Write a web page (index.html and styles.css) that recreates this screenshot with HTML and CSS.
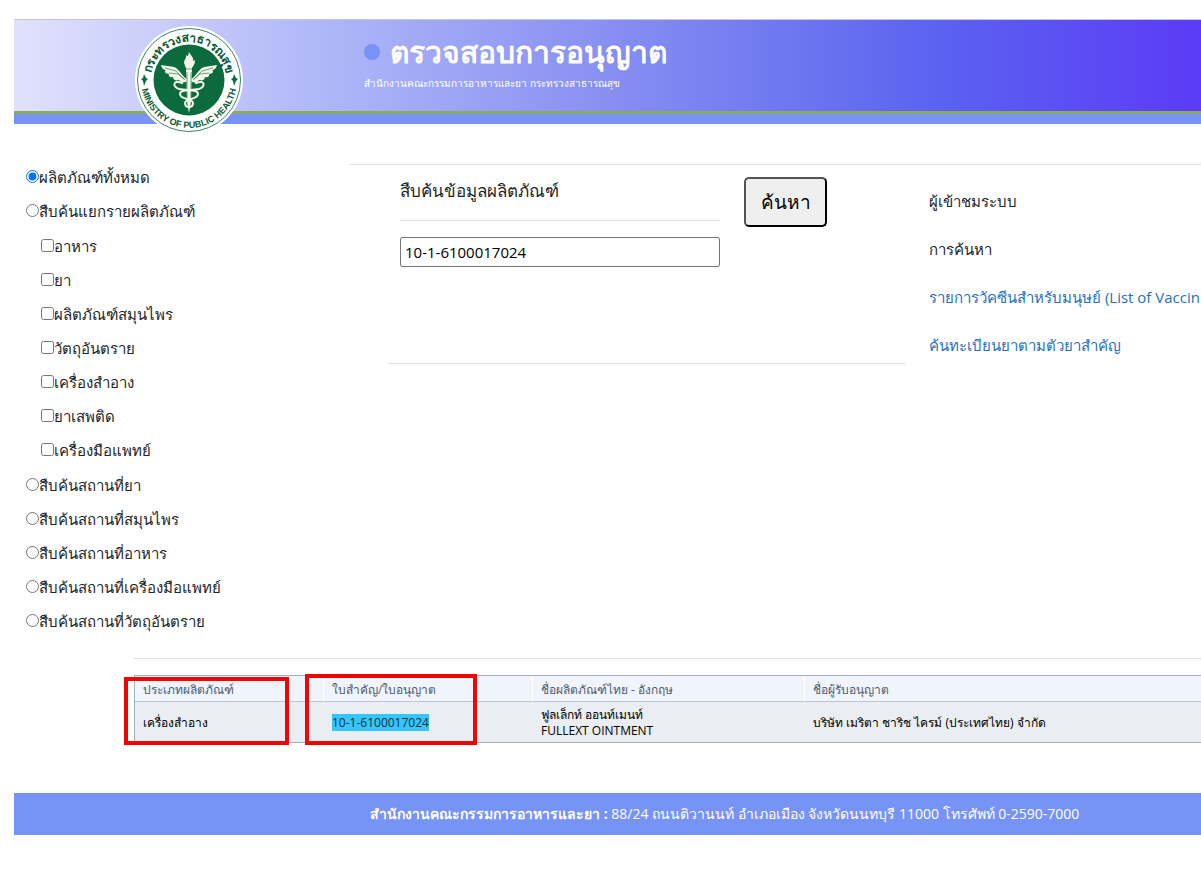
FILE: index.html
```html
<!DOCTYPE html>
<html lang="th">
	<head>
		<meta charset="utf-8">
		<title>ตรวจสอบการอนุญาต</title>
		<link rel="stylesheet" href="styles.css">
	</head>

	<body>
		<header class="banner">
			<svg class="logo" viewBox="0 0 108 108" role="img" aria-label="Ministry of Public Health">
				<defs>
					<path id="arcTop" d="M16 54 A38 38 0 0 1 92 54"/>
					<path id="arcBottom" d="M6 54 A48 48 0 0 0 102 54"/>
				</defs>
				<circle cx="54" cy="54" r="54" fill="#fff"/>
				<circle cx="54" cy="54" r="51.500" fill="none" stroke="#3b8560" stroke-width="1"/>
				<circle cx="54" cy="54" r="35.500" fill="#0b6b3c"/>
				<text class="seal-thai"><textPath href="#arcTop" startOffset="50%" text-anchor="middle">กระทรวงสาธารณสุข</textPath></text>
				<text class="seal-eng"><textPath href="#arcBottom" startOffset="50%" text-anchor="middle">MINISTRY OF PUBLIC HEALTH</textPath></text>
				<path fill="#0b6b3c" d="M9 48l2 4 2 1-2 2-2 5-1-5-2-2 2-1zM99 48l2 4 2 1-2 2-2 5-1-5-2-2 2-1z"/>
				<g transform="translate(0 4)">
					<!-- torch and wings -->
					<g fill="#f3f5ea">
						<path d="M52 49C47 47 45 39 39 37L26 35C27 39 29 40 31 40C29 41 30 44 34 44C33 46 35 48 38 47C38 50 41 51 44 50C46 53 50 53 52 51Z"/>
						<path d="M56 49C61 47 63 39 69 37L82 35C81 39 79 40 77 40C79 41 78 44 74 44C75 46 73 48 70 47C70 50 67 51 64 50C62 53 58 53 56 51Z"/>
						<path d="M51 38H57L56 72L54 83L52 72Z"/>
						<path d="M50 35C47 31 52 29 51 25C54 28 53 24 54 22C55 25 59 27 58 31L60 30C60 35 57 39 54 39C52 39 49 36 50 35Z"/>
					</g>
					<path class="wing-line" d="M30 38L41 41L49 49M34 43L43 44L50 50M78 38L67 41L59 49M74 43L65 44L58 50"/>
					<path class="wing-line" d="M49 39H59M52 42V72M56 42V72"/>
					<!-- snakes -->
					<g class="snake">
						<path d="M47 53C38 49 37 57 44 59C53 61 63 59 63 64C63 70 50 68 50 73C50 76 52 77 54 77"/>
						<path d="M61 53C70 49 71 57 64 59C55 61 45 59 45 64C45 70 58 68 58 73C58 76 56 77 54 77"/>
					</g>
				</g>
			</svg>
			<div class="banner-text">
				<h1>ตรวจสอบการอนุญาต</h1>
				<p>สำนักงานคณะกรรมการอาหารและยา กระทรวงสาธารณสุข</p>
			</div>
		</header>

		<main>
			<form class="search">
				<div class="types">
					<label><input type="radio" name="type" checked>ผลิตภัณฑ์ทั้งหมด</label>
					<label><input type="radio" name="type">สืบค้นแยกรายผลิตภัณฑ์</label>
					<div class="subtypes">
						<label><input type="checkbox">อาหาร</label>
						<label><input type="checkbox">ยา</label>
						<label><input type="checkbox">ผลิตภัณฑ์สมุนไพร</label>
						<label><input type="checkbox">วัตถุอันตราย</label>
						<label><input type="checkbox">เครื่องสำอาง</label>
						<label><input type="checkbox">ยาเสพติด</label>
						<label><input type="checkbox">เครื่องมือแพทย์</label>
					</div>
					<label><input type="radio" name="type">สืบค้นสถานที่ยา</label>
					<label><input type="radio" name="type">สืบค้นสถานที่สมุนไพร</label>
					<label><input type="radio" name="type">สืบค้นสถานที่อาหาร</label>
					<label><input type="radio" name="type">สืบค้นสถานที่เครื่องมือแพทย์</label>
					<label><input type="radio" name="type">สืบค้นสถานที่วัตถุอันตราย</label>
				</div>

				<div class="panel">
					<div class="query">
						<div class="field">
							<label for="keyword">สืบค้นข้อมูลผลิตภัณฑ์</label>
							<input type="text" id="keyword" value="10-1-6100017024">
						</div>
						<button type="button">ค้นหา</button>
					</div>
					<div class="links">
						<span>ผู้เข้าชมระบบ</span>
						<span>การค้นหา</span>
						<a href="#">รายการวัคซีนสำหรับมนุษย์ (List of Vaccin</a>
						<a href="#">ค้นทะเบียนยาตามตัวยาสำคัญ</a>
					</div>
				</div>
			</form>

			<section class="results">
				<div class="table-wrap">
					<table>
						<thead>
							<tr>
								<th class="col-type">ประเภทผลิตภัณฑ์</th>
								<th class="col-number">ใบสำคัญ/ใบอนุญาต</th>
								<th class="col-name">ชื่อผลิตภัณฑ์ไทย - อังกฤษ</th>
								<th>ชื่อผู้รับอนุญาต</th>
							</tr>
						</thead>
						<tbody>
							<tr>
								<td>เครื่องสำอาง</td>
								<td><mark>10-1-6100017024</mark></td>
								<td>ฟูลเล็กท์ ออนท์เมนท์<br>FULLEXT OINTMENT</td>
								<td>บริษัท เมริตา ชาริช ไครม์ (ประเทศไทย) จำกัด</td>
							</tr>
						</tbody>
					</table>
					<div class="frame frame-type"></div>
					<div class="frame frame-number"></div>
				</div>
			</section>
		</main>

		<footer>
			<b>สำนักงานคณะกรรมการอาหารและยา :</b> 88/24 ถนนติวานนท์ อำเภอเมือง จังหวัดนนทบุรี 11000 โทรศัพท์ 0-2590-7000
		</footer>
	</body>
</html>
```
FILE: styles.css
```css
* {
	box-sizing: border-box;
}

body {
	margin: 19px 0 0 14px;
	font: 16px/24px "Open Sans", "Noto Sans", sans-serif;
	color: #212529;
	background: white;
	overflow-x: hidden;
}

/* banner */
.banner {
	display: flex;
	align-items: flex-start;
	height: 105px;
	padding: 6px 0 0 121px;
	border-top: 1px solid #c3c4d6;
	background:
		linear-gradient(#7793f5, #7793f5) bottom / 100% 10px no-repeat,
		linear-gradient(#8aa965, #8aa965) 0 91px / 100% 3px no-repeat,
		linear-gradient(90deg, #e0e2fc 0%, #aab2f7 29%, #7a82f1 58%, #5a62f0 78%, #5c3bf6 100%);
}

.logo {
	width: 108px;
	height: 108px;
	flex: none;
}

.seal-thai {
	font: bold 12px "Noto Sans", sans-serif;
	fill: #0b5a34;
}

.seal-eng {
	font: bold 9px "Liberation Sans", sans-serif;
	fill: #0b5a34;
}

.wing-line {
	fill: none;
	stroke: #0b6b3c;
	stroke-width: 1;
	opacity: 0.6;
}

.snake {
	fill: none;
	stroke: #f3f5ea;
	stroke-width: 2;
	stroke-linecap: round;
}

.banner-text {
	margin-left: 121px;
	color: white;
	white-space: nowrap;
}

h1 {
	display: flex;
	align-items: center;
	gap: 10px;
	margin: 5px 0 0;
	font-size: 30px;
	line-height: 42px;
	font-weight: 500;
	-webkit-text-stroke: 1px white;
}

h1::before {
	content: "";
	width: 16px;
	height: 16px;
	border-radius: 50%;
	background: #7793f5;
}

.banner-text p {
	margin: 0;
	font-size: 10px;
	line-height: 20px;
}

/* search form */
.search {
	display: flex;
	padding-top: 40px;
}

.types {
	flex: none;
	width: 336px;
	padding-left: 12px;
}

.types label {
	display: flex;
	align-items: center;
	height: 34px;
	font-size: 15px;
}

.types > label:first-child {
	margin-top: -4px;
}

.types input {
	width: 13px;
	height: 13px;
	margin: 0 0 2px;
}

.subtypes {
	padding: 1px 0 1px 15px;
}

.panel {
	display: flex;
	flex: 1;
	gap: 24px;
	min-width: 0;
	padding-left: 38px;
	border-top: 1px solid #dee0e2;
	overflow: hidden;
}

.query {
	display: flex;
	align-items: flex-start;
	gap: 24px;
	flex: none;
	width: 517px;
	height: 199px;
	padding: 12px;
	border-bottom: 1px solid #dee0e2;
}

.field {
	width: 320px;
}

.field label {
	display: block;
	height: 44px;
	margin-bottom: 16px;
	font-size: 17px;
	line-height: 28px;
	border-bottom: 1px solid #dee0e2;
}

.field input {
	display: block;
	width: 100%;
	height: 30px;
	padding: 1px 4px;
	border: 1px solid #767676;
	border-radius: 2px;
	font: inherit;
	font-size: 15px;
	color: black;
}

button {
	width: 83px;
	height: 50px;
	border: 2px outset black;
	border-radius: 5px;
	background: #efefef;
	font: 19px "Open Sans", "Noto Sans", sans-serif;
	color: black;
}

.links {
	display: flex;
	flex-direction: column;
	gap: 24px;
	padding-top: 24px;
	font-size: 15px;
	white-space: nowrap;
}

.links a {
	color: #1f72c4;
	text-decoration: none;
}

/* results */
.results {
	margin: 20px 0 0 120px;
	padding-top: 16px;
	border-top: 1px solid #dee0e2;
}

.table-wrap {
	position: relative;
}

table {
	width: 100%;
	table-layout: fixed;
	border-spacing: 0;
	border: 1px solid #a3afb9;
	border-right: none;
	font-size: 12px;
	line-height: 16px;
	color: black;
	background: #eaedf1;
}

th {
	height: 26px;
	padding: 2px 8px 0;
	border-bottom: 1px solid #bcc5d4;
	border-right: 1px solid white;
	background: #f0f4fd;
	color: #4e5c70;
	font-weight: normal;
	text-align: left;
}

th:last-child {
	border-right: none;
}

td {
	height: 40px;
	padding: 2px 8px 0;
}

.col-type {
	width: 189px;
}

.col-number {
	width: 209px;
}

.col-name {
	width: 272px;
}

mark {
	background: #36c5f8;
	color: #10324a;
}

.frame {
	position: absolute;
	border: 4px solid #f00505;
}

.frame-type {
	top: 2px;
	left: -10px;
	width: 165px;
	height: 68px;
}

.frame-number {
	top: -1px;
	left: 171px;
	width: 172px;
	height: 71px;
}

footer {
	margin-top: 50px;
	padding: 9px 0 9px 356px;
	background: #7793f5;
	color: white;
	font-size: 14px;
	white-space: nowrap;
}
```
